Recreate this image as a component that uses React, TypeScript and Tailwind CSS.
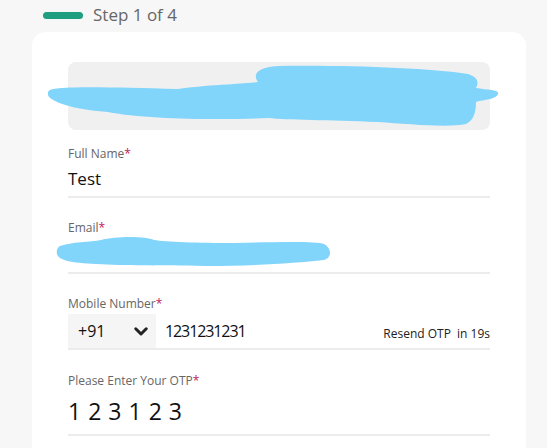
import React from "react";

const Req = () => <span className="text-[#c2185b]">*</span>;

function Field({ label, children }: { label: string; children: React.ReactNode }) {
  return (
    <div className="border-b-2 border-[#ececec]">
      <div className="text-[12px] leading-4 text-[#666]">
        {label}
        <Req />
      </div>
      {children}
    </div>
  );
}

export default function App() {
  return (
    <div className="h-[448px] overflow-hidden bg-[#f7f7f7] font-['Open_Sans',sans-serif]">
      <div className="flex h-8 items-center gap-[10px] pl-[43px] pb-[2px]">
        <span className="h-[7px] w-[40px] rounded-full bg-[#1f9e80]" />
        <span className="text-[17px] text-[#666]">Step 1 of 4</span>
      </div>
      <div className="mx-[32px] mr-[21px] rounded-[14px] bg-white px-[36px] pt-[30px] pb-10">
        <div className="relative h-[68px] rounded-[8px] bg-[#f0f0f0]">
          {/* redaction scribble */}
          <svg className="absolute left-[-20px] top-0" width="452" height="68" viewBox="0 0 452 68">
            <path
              fill="#81d4fa"
              d="M2 28 C10 24 60 25 130 27 C170 22 200 22 210 20 C204 12 210 5 230 4 C300 3 380 6 420 12 C432 16 430 22 428 26 C440 28 452 28 450 32 C448 38 432 38 428 40 C428 50 426 58 418 62 C400 66 360 62 330 60 C280 58 240 58 220 56 C180 58 100 58 60 50 C30 48 10 42 2 36 C-2 32 0 29 2 28 Z"
            />
          </svg>
        </div>
        <div className="pt-[16px]">
          <Field label="Full Name">
            <div className="flex h-[34px] items-center text-[17px] text-[#111]">Test</div>
          </Field>
        </div>
        <div className="pt-[22px]">
          <Field label="Email">
            <div className="relative h-[36px]">
              <svg className="absolute left-[-12px] top-0" width="275" height="32" viewBox="0 0 275 32">
                <path
                  fill="#81d4fa"
                  d="M4 10 C15 6 35 6 45 4 C60 0 90 0 98 4 C110 6 140 7 180 7 C220 6 260 5 268 8 C276 12 276 22 268 24 C240 27 200 30 150 30 C100 29 70 30 40 28 C15 27 2 24 1 18 C0 14 2 11 4 10 Z"
                />
              </svg>
            </div>
          </Field>
        </div>
        <div className="pt-[22px]">
          <Field label="Mobile Number">
            <div className="mt-[2px] flex h-[34px] items-center">
              <div className="flex h-full w-[88px] items-center justify-between bg-[#f5f5f5] pl-[10px] pr-[6px] text-[16px] text-[#111]">
                <span>+91</span>
                <svg width="18" height="18" viewBox="0 0 24 24" fill="none" stroke="#222" strokeWidth="4" strokeLinecap="round" strokeLinejoin="round">
                  <path d="M5 9l7 7 7-7" />
                </svg>
              </div>
              <span className="ml-[9px] text-[16px] tracking-[-1.1px] text-[#111]">1231231231</span>
              <span className="ml-auto mt-[6px] text-[12px] text-[#222]">
                Resend OTP <span className="ml-[3px]">in 19s</span>
              </span>
            </div>
          </Field>
        </div>
        <div className="pt-[23px]">
          <Field label="Please Enter Your OTP">
            <div className="flex h-[45px] items-center gap-[7px] text-[23px] font-medium text-[#111]">
              {["1", "2", "3", "1", "2", "3"].map((n, i) => (
                <span key={i}>{n}</span>
              ))}
            </div>
          </Field>
        </div>
      </div>
    </div>
  );
}
